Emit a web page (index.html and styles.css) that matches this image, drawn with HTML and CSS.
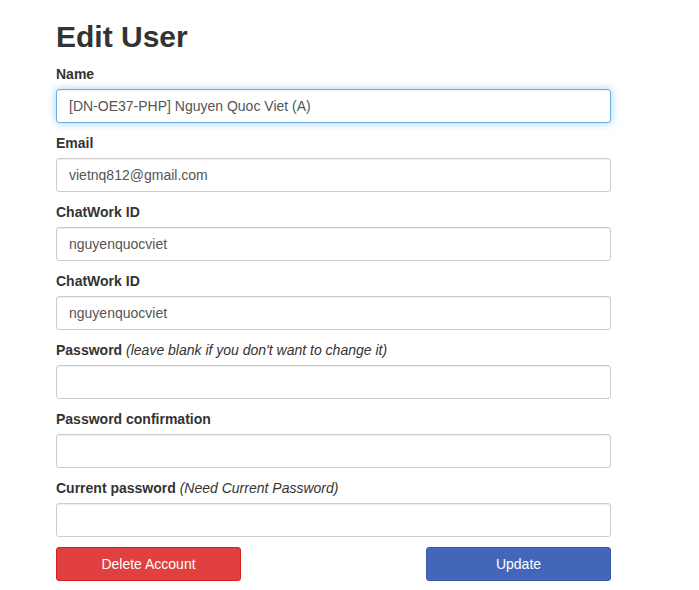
FILE: index.html
```html
<!DOCTYPE html>
<html>
<head>
<meta charset="utf-8">
<link rel="stylesheet" href="styles.css">
</head>
<body>
<div class="container">
  <h1 class="title">Edit User</h1>
  <form class="form">
    <div class="group">
      <label class="label">Name</label>
      <div class="input focus">[DN-OE37-PHP] Nguyen Quoc Viet (A)</div>
    </div>
    <div class="group">
      <label class="label">Email</label>
      <div class="input">vietnq812@gmail.com</div>
    </div>
    <div class="group">
      <label class="label">ChatWork ID</label>
      <div class="input">nguyenquocviet</div>
    </div>
    <div class="group">
      <label class="label">ChatWork ID</label>
      <div class="input">nguyenquocviet</div>
    </div>
    <div class="group">
      <label class="label">Password <i class="hint">(leave blank if you don't want to change it)</i></label>
      <div class="input"></div>
    </div>
    <div class="group">
      <label class="label">Password confirmation</label>
      <div class="input"></div>
    </div>
    <div class="group">
      <label class="label">Current password <i class="hint">(Need Current Password)</i></label>
      <div class="input"></div>
    </div>
    <div class="actions">
      <button type="button" class="btn btn-danger">Delete Account</button>
      <button type="button" class="btn btn-primary">Update</button>
    </div>
  </form>
</div>
</body>
</html>
```
FILE: styles.css
```css
html, body {
  margin: 0;
  padding: 0;
  background: #fff;
}
body {
  font-family: "Liberation Sans", Arial, sans-serif;
  font-size: 14px;
  line-height: 20px;
  color: #333;
}
.container {
  width: 555px;
  margin-left: 56px;
}
.title {
  font-size: 30px;
  line-height: 33px;
  font-weight: bold;
  margin: 20px 0 11px;
  color: #333;
}
.form {
  display: flex;
  flex-direction: column;
  gap: 10px;
}
.group {
  display: flex;
  flex-direction: column;
}
.label {
  display: block;
  font-weight: bold;
  margin-bottom: 5px;
  font-size: 14px;
  line-height: 20px;
}
.hint {
  font-weight: normal;
  font-style: italic;
}
.input {
  box-sizing: border-box;
  height: 34px;
  padding: 6px 12px;
  border: 1px solid #ccc;
  border-radius: 3px;
  color: #555;
  font-size: 14px;
  line-height: 20px;
  background: #fff;
  box-shadow: inset 0 1px 1px rgba(0,0,0,.075);
}
.input.focus {
  border-color: #66afe9;
  box-shadow: inset 0 1px 1px rgba(0,0,0,.075), 0 0 8px rgba(102,175,233,.6);
}
.actions {
  display: flex;
  justify-content: space-between;
}
.btn {
  width: 185px;
  height: 34px;
  box-sizing: border-box;
  border-radius: 3px;
  color: #fff;
  font-family: "Liberation Sans", Arial, sans-serif;
  font-size: 14px;
  padding: 0;
  border: 1px solid transparent;
}
.btn-danger {
  background: #e0403f;
  border-color: #d7211f;
}
.btn-primary {
  background: #4267ba;
  border-color: #3a5aa6;
}
```
